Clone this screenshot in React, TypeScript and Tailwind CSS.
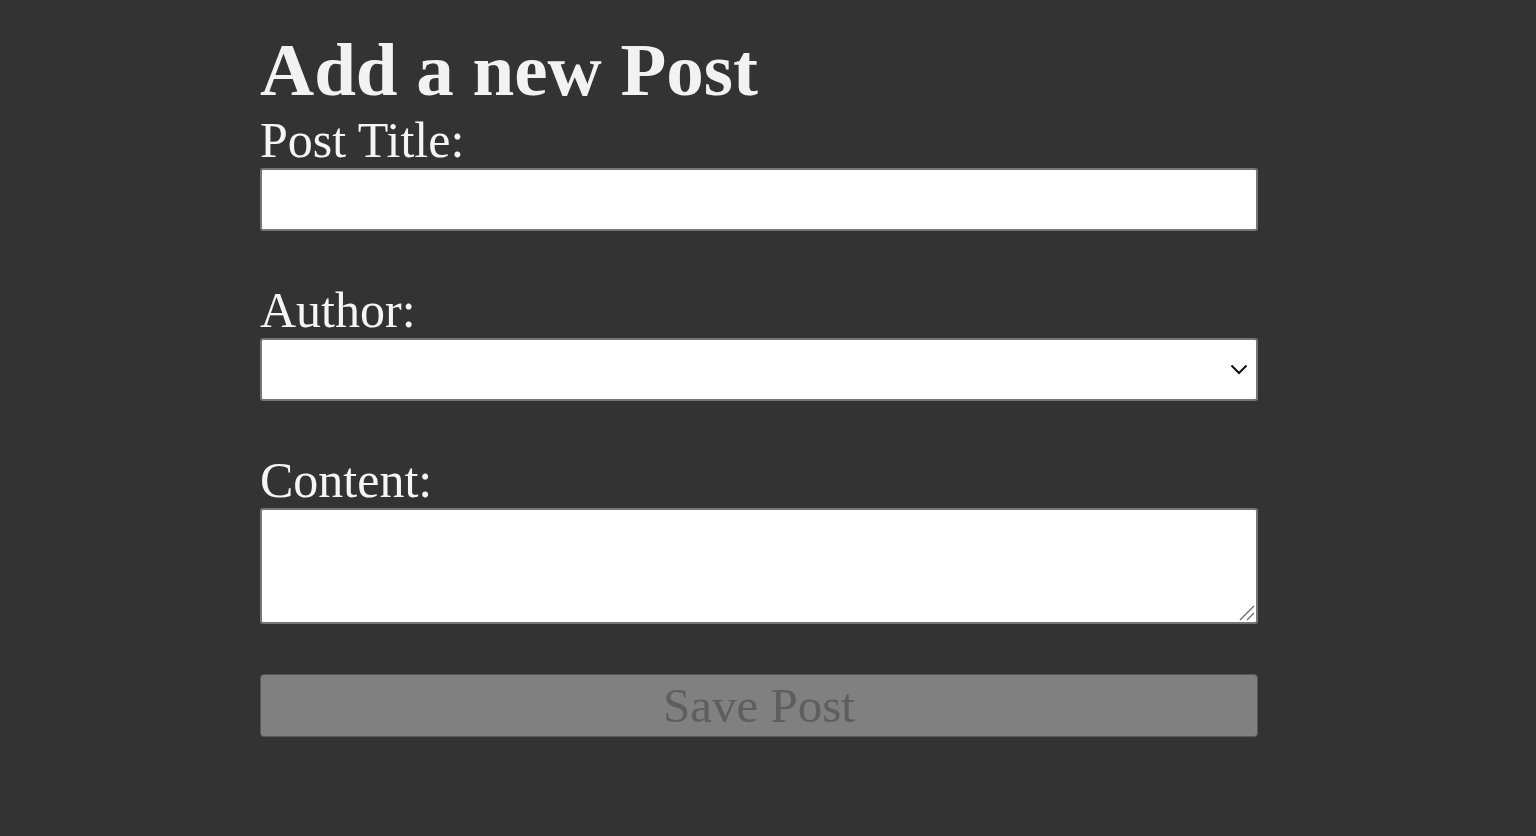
import React from "react";

export default function App() {
  const font = { fontFamily: '"Liberation Serif", "Times New Roman", serif' };
  return (
    <div className="min-h-[836px] w-full bg-[#333333] text-[#f5f5f5]" style={font}>
      <div className="ml-[260px] w-[998px] pt-[32px]">
        <h1 className="text-[75px] font-bold leading-[75px] text-[#f2f2f2]">Add a new Post</h1>
        <form className="mt-[9px] flex flex-col" onSubmit={(e) => e.preventDefault()}>
          <label htmlFor="postTitle" className="block text-[50px] leading-[49px]">Post Title:</label>
          <input
            id="postTitle"
            type="text"
            className="mt-[3px] block h-[63px] w-full rounded-[3px] border-2 border-[#767676] bg-white text-black"
          />
          <label htmlFor="postAuthor" className="mt-[55px] block text-[50px] leading-[49px]">Author:</label>
          <div className="relative mt-[3px]">
            <select
              id="postAuthor"
              className="block h-[63px] w-full appearance-none rounded-[3px] border-2 border-[#767676] bg-white text-black"
            >
              <option value=""></option>
            </select>
            <svg
              className="pointer-events-none absolute right-[10px] top-[26px]"
              width="18"
              height="11"
              viewBox="0 0 18 11"
            >
              <path d="M1.5 1.5 L9 9 L16.5 1.5" fill="none" stroke="#111" strokeWidth="2" />
            </svg>
          </div>
          <label htmlFor="postContent" className="mt-[55px] block text-[50px] leading-[49px]">Content:</label>
          <div className="relative mt-[3px]">
            <textarea
              id="postContent"
              className="block h-[116px] w-full resize-none rounded-[3px] border-2 border-[#767676] bg-white text-black"
            />
            <svg
              className="pointer-events-none absolute bottom-[3px] right-[3px]"
              width="16"
              height="16"
              viewBox="0 0 16 16"
            >
              <path d="M1 15 L15 1 M8 15 L15 8" fill="none" stroke="#6e6e6e" strokeWidth="1.4" />
            </svg>
          </div>
          <button
            type="button"
            disabled
            className="mt-[50px] flex h-[63px] w-full items-center justify-center rounded-[4px] border border-[#5a5a5a] bg-[#808080] text-[49px] leading-[49px] text-[#5e5e5e]"
          >
            Save Post
          </button>
        </form>
      </div>
    </div>
  );
}
